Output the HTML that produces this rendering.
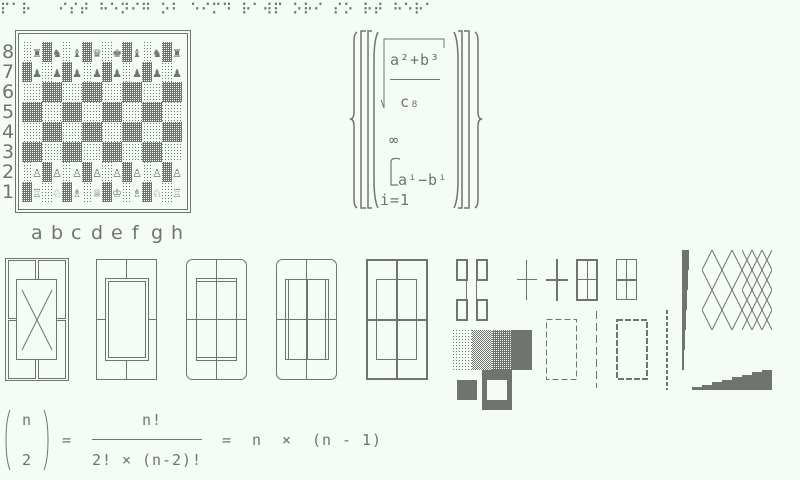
<!DOCTYPE html>
<html><head><meta charset="utf-8"><style>
html,body{margin:0;padding:0;background:#f5fbf6;}
body{width:800px;height:480px;position:relative;overflow:hidden;font-family:"DejaVu Sans Mono","Liberation Mono",monospace;color:#707470;}
.t{position:absolute;white-space:pre;font-size:15px;line-height:20px;letter-spacing:0.97px;}
.b{font-size:16px;letter-spacing:0.37px;line-height:18px;transform:scaleX(0.875);transform-origin:0 0;}
.r{font-size:19px;letter-spacing:0;font-family:"DejaVu Sans",sans-serif;}
svg{position:absolute;left:0;top:0;}
</style></head><body>
<svg width="800" height="480" viewBox="0 0 800 480" fill="none" stroke="#707470" stroke-width="1">
<defs>
<pattern id="lt" width="3" height="3" patternUnits="userSpaceOnUse"><rect width="1" height="1" fill="#707470" stroke="none"/></pattern>
<pattern id="md" width="2" height="2" patternUnits="userSpaceOnUse"><rect width="1" height="1" fill="#707470" stroke="none"/><rect x="1" y="1" width="1" height="1" fill="#707470" stroke="none"/></pattern>
<pattern id="dk" width="2" height="2" patternUnits="userSpaceOnUse"><rect width="2" height="2" fill="#707470" stroke="none"/><rect width="1" height="1" fill="#f5fbf6" stroke="none"/></pattern>
<clipPath id="cl"><rect x="702" y="250" width="40" height="80"/></clipPath>
<clipPath id="cr"><rect x="742" y="250" width="30" height="80"/></clipPath>
</defs>
<rect x="15.5" y="30.5" width="175" height="182"/>
<rect x="18.5" y="33.5" width="169" height="176"/>
<g id="board" stroke="none"></g>
<g stroke-width="1.5">
<path d="M357 32 Q354 34 354 40 L354 112 Q354 118 351 119 Q354 120 354 126 L354 200 Q354 206 357 208"/>
<path d="M475 32 Q478 34 478 40 L478 112 Q478 118 481 119 Q478 120 478 126 L478 200 Q478 206 475 208"/>
<path d="M366 31 L361 31 L361 208 L366 208"/>
<path d="M372 31 L368 31 L368 208 L372 208"/>
<path d="M464 31 L469 31 L469 208 L464 208"/>
<path d="M458 31 L462 31 L462 208 L458 208"/>
<path d="M378 32 Q374 40 374 60 L374 180 Q374 200 378 208"/>
<path d="M454 32 Q458 40 458 60 L458 180 Q458 200 454 208"/>
</g>
<path d="M381 100 L384 108 L384 39 L444 39 L444 48"/>
<line x1="390" y1="79.5" x2="440" y2="79.5"/>
<path d="M400 159 Q391 157 391 162 L391 185 L398 185" stroke-width="1.2"/>
<rect x="5.5" y="258.5" width="63" height="122"/>
<rect x="8.5" y="260.5" width="27" height="58"/><rect x="38.5" y="260.5" width="27" height="58"/>
<rect x="8.5" y="320.5" width="27" height="58"/><rect x="38.5" y="320.5" width="27" height="58"/>
<rect x="16.5" y="279.5" width="40" height="80" fill="#f5fbf6"/>
<line x1="22" y1="290" x2="52" y2="350"/><line x1="52" y1="290" x2="22" y2="350"/>
<rect x="96.5" y="259.5" width="60" height="120"/>
<line x1="126.5" y1="259" x2="126.5" y2="278"/><line x1="126.5" y1="360" x2="126.5" y2="380"/>
<line x1="96" y1="319.5" x2="106" y2="319.5"/><line x1="148" y1="319.5" x2="157" y2="319.5"/>
<rect x="105.5" y="278.5" width="43" height="82"/><rect x="108.5" y="281.5" width="37" height="76"/>
<rect x="186.5" y="259.5" width="60" height="120" rx="6"/>
<line x1="216.5" y1="259" x2="216.5" y2="380"/><line x1="186" y1="319.5" x2="247" y2="319.5"/>
<rect x="196.5" y="278.5" width="40" height="82"/>
<line x1="196" y1="281.5" x2="237" y2="281.5"/><line x1="196" y1="357.5" x2="237" y2="357.5"/>
<rect x="276.5" y="259.5" width="60" height="120" rx="6"/>
<line x1="306.5" y1="259" x2="306.5" y2="380"/><line x1="276" y1="319.5" x2="337" y2="319.5"/>
<rect x="285.5" y="279.5" width="43" height="80"/>
<line x1="288.5" y1="279" x2="288.5" y2="360"/><line x1="325.5" y1="279" x2="325.5" y2="360"/>
<line x1="307.5" y1="279" x2="307.5" y2="360"/>
<rect x="367" y="260" width="60" height="119" stroke-width="2"/>
<line x1="397" y1="259" x2="397" y2="380" stroke-width="2"/><line x1="366" y1="320" x2="428" y2="320" stroke-width="2"/>
<rect x="376.5" y="279.5" width="40" height="80"/>
<g stroke-width="2">
<rect x="457" y="260" width="10" height="20"/><rect x="477" y="260" width="10" height="20"/>
<rect x="457" y="300" width="10" height="20"/><rect x="477" y="300" width="10" height="20"/>
</g>
<line x1="466.5" y1="280" x2="466.5" y2="300"/><line x1="476.5" y1="280" x2="476.5" y2="300"/>
<line x1="517" y1="279.5" x2="537" y2="279.5"/><line x1="526.5" y1="260" x2="526.5" y2="300"/>
<line x1="546" y1="280" x2="568" y2="280" stroke-width="2"/><line x1="557" y1="259" x2="557" y2="301" stroke-width="2"/>
<rect x="577" y="260" width="20" height="40" stroke-width="2"/>
<line x1="587.5" y1="260" x2="587.5" y2="300"/><line x1="577" y1="279.5" x2="597" y2="279.5"/>
<rect x="616.5" y="259.5" width="20" height="40"/>
<line x1="626.5" y1="259" x2="626.5" y2="300"/><line x1="616" y1="280" x2="637" y2="280" stroke-width="2"/>
<rect x="452" y="330" width="20" height="40" fill="url(#lt)" stroke="none"/>
<rect x="472" y="330" width="20" height="40" fill="url(#md)" stroke="none"/>
<rect x="492" y="330" width="20" height="40" fill="url(#dk)" stroke="none"/>
<rect x="512" y="330" width="20" height="40" fill="#707470" stroke="none"/>
<rect x="457" y="380" width="20" height="20" fill="#707470" stroke="none"/>
<path d="M482 370 H512 V410 H482 Z M487 380 V400 H507 V380 Z" fill="#707470" fill-rule="evenodd" stroke="none"/>
<rect x="546.5" y="319.5" width="30" height="60" stroke-dasharray="6,3"/>
<line x1="596.5" y1="311" x2="596.5" y2="388" stroke-dasharray="8,4"/>
<rect x="617" y="320" width="30" height="59" stroke-width="2" stroke-dasharray="6,2"/>
<line x1="667" y1="310" x2="667" y2="390" stroke-width="2" stroke-dasharray="4,2"/>
<polygon points="682,250 689,250 689,270 688,270 688,290 687,290 687,310 686,310 686,330 685,330 685,350 684,350 684,370 682,370" fill="#707470" stroke="none"/>
<polygon points="692,390 692,387 702,387 702,385 712,385 712,382 722,382 722,380 732,380 732,377 742,377 742,375 752,375 752,372 762,372 762,370 772,370 772,390" fill="#707470" stroke="none"/>
<g id="latt"></g>
<line x1="92" y1="439.5" x2="202" y2="439.5"/>
<path d="M10 410 Q6 420 6 440 Q6 460 10 470"/>
<path d="M44 410 Q48 420 48 440 Q48 460 44 470"/>
</svg>
<div class="t b" style="left:0;top:1px">⠏⠁⠗   ⠊⠎⠞ ⠓⠑⠝⠊⠛ ⠕⠃ ⠑⠊⠍⠙ ⠗⠁⠺⠏ ⠕⠗⠊ ⠎⠕ ⠗⠞ ⠓⠑⠗⠁</div>
<div class="t r" style="left:2px;top:42px">8</div>
<div class="t r" style="left:2px;top:62px">7</div>
<div class="t r" style="left:2px;top:82px">6</div>
<div class="t r" style="left:2px;top:102px">5</div>
<div class="t r" style="left:2px;top:122px">4</div>
<div class="t r" style="left:2px;top:142px">3</div>
<div class="t r" style="left:2px;top:162px">2</div>
<div class="t r" style="left:2px;top:182px">1</div>
<div class="t r" style="left:31px;top:223px">a</div>
<div class="t r" style="left:51px;top:223px">b</div>
<div class="t r" style="left:71px;top:223px">c</div>
<div class="t r" style="left:91px;top:223px">d</div>
<div class="t r" style="left:111px;top:223px">e</div>
<div class="t r" style="left:132px;top:223px">f</div>
<div class="t r" style="left:151px;top:223px">g</div>
<div class="t r" style="left:171px;top:223px">h</div>
<div class="t" style="left:390px;top:50px">a²+b³</div>
<div class="t" style="left:400px;top:92px">c₈</div>
<div class="t" style="left:389px;top:130px">∞</div>
<div class="t" style="left:398px;top:170px">aⁱ−bⁱ</div>
<div class="t" style="left:380px;top:190px">i=1</div>
<div class="t" style="left:22px;top:410px">n</div>
<div class="t" style="left:22px;top:450px">2</div>
<div class="t" style="left:62px;top:430px">=</div>
<div class="t" style="left:142px;top:410px">n!</div>
<div class="t" style="left:92px;top:450px">2! × (n-2)!</div>
<div class="t" style="left:222px;top:430px">=  n  ×  (n - 1)</div>
<script>
(function(){
var ns="http://www.w3.org/2000/svg",g=document.getElementById("board");
function el(t,a){var e=document.createElementNS(ns,t);for(var k in a)e.setAttribute(k,a[k]);return e;}
var blk="♜♞♝♛♚♝♞♜",wht="♖♘♗♕♔♗♘♖";
for(var r=0;r<8;r++)for(var c=0;c<8;c++){
 var x=22+c*20,y=42+r*20,dark=(r+c)%2==1;
 var pc=(r==0||r==1||r==6||r==7);
 g.appendChild(el("rect",{x:x,y:y,width:pc?10:20,height:20,fill:dark?"url(#dk)":"url(#lt)"}));
 if(pc){var t=el("text",{x:x+15,y:y+15,"text-anchor":"middle","font-size":"11","fill":"#707470","font-family":"DejaVu Sans"});
 t.textContent=r==0?blk[c]:r==1?"♟":r==6?"♙":wht[c];g.appendChild(t);}
}
var L=document.getElementById("latt");
var gl=el("g",{"clip-path":"url(#cl)"}),gr=el("g",{"clip-path":"url(#cr)"});
for(var k=-10;k<12;k++){
 var c1=837+20*k; gl.appendChild(el("line",{x1:c1-125,y1:250,x2:c1-165,y2:330}));
 var c2=587+20*k; gl.appendChild(el("line",{x1:c2+125,y1:250,x2:c2+165,y2:330}));
}
for(var k=-20;k<20;k++){
 var c1=837+10*k; gr.appendChild(el("line",{x1:c1-125,y1:250,x2:c1-165,y2:330}));
 var c2=587+10*k; gr.appendChild(el("line",{x1:c2+125,y1:250,x2:c2+165,y2:330}));
}
L.appendChild(gl);L.appendChild(gr);
})();
</script>
</body></html>
